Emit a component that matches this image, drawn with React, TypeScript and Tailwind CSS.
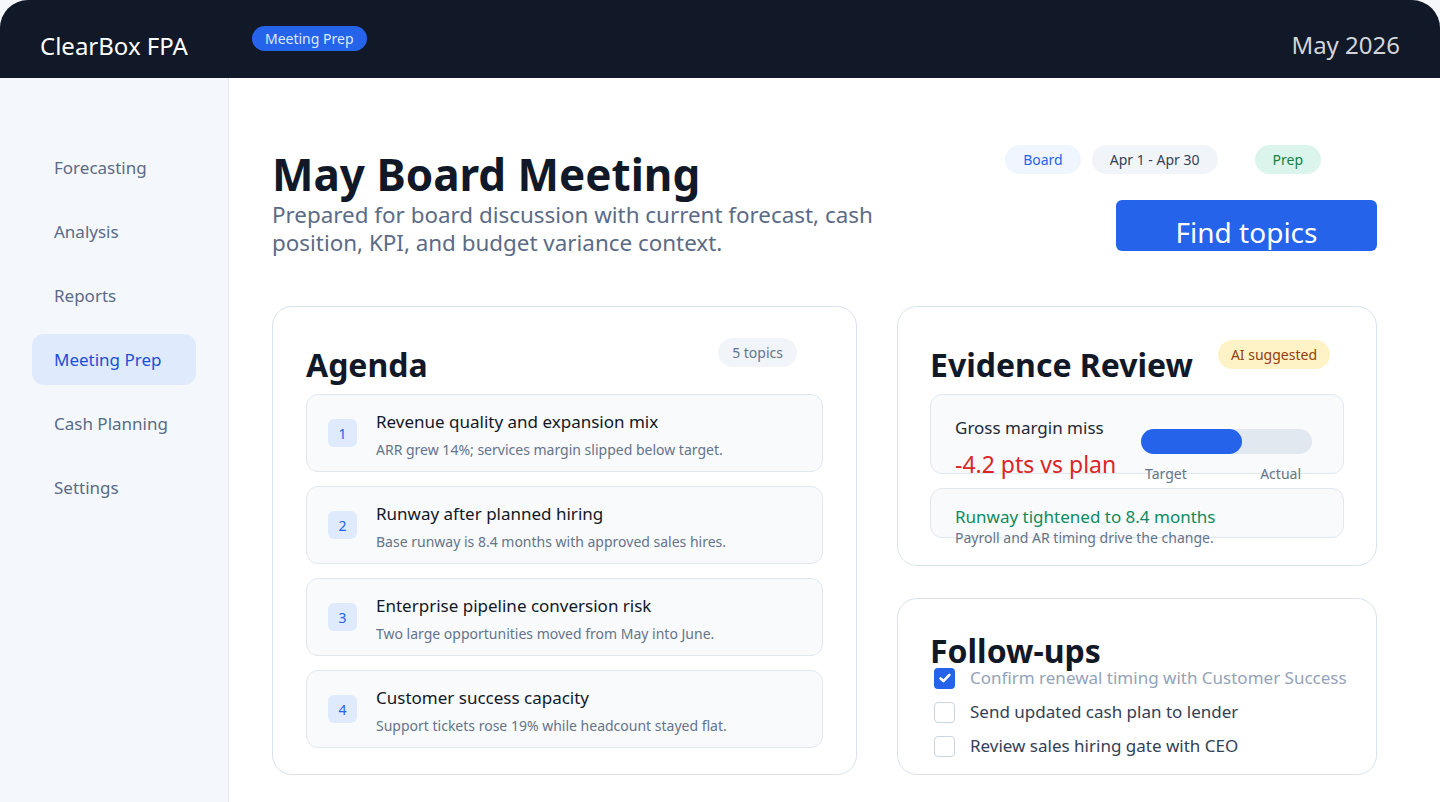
import React from 'react';

// --- DATA ---
const navItems = ['Forecasting', 'Analysis', 'Reports', 'Meeting Prep', 'Cash Planning', 'Settings'];

const agenda = [
    { title: 'Revenue quality and expansion mix', note: 'ARR grew 14%; services margin slipped below target.' },
    { title: 'Runway after planned hiring', note: 'Base runway is 8.4 months with approved sales hires.' },
    { title: 'Enterprise pipeline conversion risk', note: 'Two large opportunities moved from May into June.' },
    { title: 'Customer success capacity', note: 'Support tickets rose 19% while headcount stayed flat.' },
];

const followUps = [
    { label: 'Confirm renewal timing with Customer Success', done: true },
    { label: 'Send updated cash plan to lender', done: false },
    { label: 'Review sales hiring gate with CEO', done: false },
];

// --- SMALL PIECES ---
const Pill = ({ children, className }: { children: React.ReactNode; className: string }) => (
    <span className={`inline-flex h-[29px] items-center whitespace-nowrap rounded-full text-[14px] ${className}`}>
        {children}
    </span>
);

const Checkbox = ({ checked }: { checked: boolean }) =>
    checked ? (
        <span className="flex h-[21px] w-[21px] shrink-0 items-center justify-center rounded-[4px] bg-[#2563eb]">
            <svg viewBox="0 0 16 16" className="h-[14px] w-[14px]" fill="none">
                <path d="M3 8.5l3.2 3L13 4.5" stroke="white" strokeWidth="3" strokeLinecap="round" strokeLinejoin="round" />
            </svg>
        </span>
    ) : (
        <span className="h-[21px] w-[21px] shrink-0 rounded-[4px] border border-[#cbd5e1] bg-white" />
    );

// --- MAIN ---
export default function App() {
    return (
        <div className="h-[802px] w-[1440px] overflow-hidden bg-[#f5f7fb] font-['Noto_Sans','Open_Sans',sans-serif]">
            <div className="flex h-full flex-col overflow-hidden rounded-t-[28px]">
                {/* Top bar */}
                <header className="flex h-[78px] shrink-0 items-start bg-[#111827] px-[40px]">
                    <span className="mt-[30px] text-[24px] leading-[32px] text-white">ClearBox FPA</span>
                    <span className="ml-[64px] mt-[26px] inline-flex h-[25px] items-center rounded-full bg-[#2563eb] px-[13px] text-[14px] text-[#dbeafe]">
                        Meeting Prep
                    </span>
                    <span className="ml-auto mt-[29px] text-[24px] leading-[32px] text-[#d1d5db]">May 2026</span>
                </header>

                <div className="flex min-h-0 flex-1">
                    {/* Sidebar */}
                    <aside className="flex w-[229px] shrink-0 flex-col gap-[13px] border-r border-[#e2e8f0] bg-[#f4f7fb] px-[32px] pt-[64px]">
                        {navItems.map((item) => {
                            const active = item === 'Meeting Prep';
                            return (
                                <div
                                    key={item}
                                    className={`flex h-[51px] items-center whitespace-nowrap rounded-xl px-[22px] text-[17px] ${active ? 'bg-[#dfeafd] text-[#1d4ed8]' : 'text-[#5b6b86]'}`}
                                >
                                    {item}
                                </div>
                            );
                        })}
                    </aside>

                    {/* Content */}
                    <main className="flex min-w-0 flex-1 flex-col bg-white pl-[43px] pr-[63px] pt-[67px]">
                        {/* Title row */}
                        <div className="flex h-[161px] shrink-0 justify-between">
                            <div className="pt-[5px]">
                                <h1 className="text-[44px] font-bold leading-[1.1] text-[#111827]">May Board Meeting</h1>
                                <p className="mt-[3px] w-[620px] text-[22.4px] leading-[28px] text-[#5b6b86]">
                                    Prepared for board discussion with current forecast, cash position, KPI, and budget variance context.
                                </p>
                            </div>
                            <div className="flex flex-col items-end">
                                <div className="mr-[56px] flex items-center">
                                    <Pill className="bg-[#eff6ff] px-[18px] text-[#2563eb]">Board</Pill>
                                    <Pill className="ml-[11px] bg-[#f1f5f9] px-[18px] text-[#334155]">Apr 1 - Apr 30</Pill>
                                    <Pill className="ml-[37px] bg-[#dcf5ec] px-[18px] text-[#15803d]">Prep</Pill>
                                </div>
                                <button className="mt-[26px] flex h-[51px] w-[261px] items-center justify-center rounded-md bg-[#2563eb] pt-[12px] text-[28px] text-white">
                                    Find topics
                                </button>
                            </div>
                        </div>

                        {/* Cards */}
                        <div className="grid grid-cols-[585px_480px] gap-x-[40px]">
                            {/* Agenda */}
                            <section className="h-[469px] rounded-[20px] border border-[#d9e2ef] px-[33px] pt-[31px]">
                                <div className="flex items-start justify-between">
                                    <h2 className="mt-[7px] text-[32px] font-bold leading-[40px] text-[#111827]">Agenda</h2>
                                    <Pill className="mr-[26px] bg-[#f1f5f9] px-[14px] text-[#64748b]">5 topics</Pill>
                                </div>
                                <div className="mt-[9px] flex flex-col gap-[14px]">
                                    {agenda.map((a, i) => (
                                        <div key={a.title} className="flex h-[78px] items-center rounded-xl border border-[#e2e8f0] bg-[#f8fafc] pl-[21px]">
                                            <span className="flex h-[28px] w-[29px] shrink-0 items-center justify-center rounded-md bg-[#dfeafd] text-[14px] text-[#2563eb]">
                                                {i + 1}
                                            </span>
                                            <div className="ml-[19px] pt-[3px]">
                                                <div className="text-[17px] leading-[24px] text-[#111827]">{a.title}</div>
                                                <div className="mt-[6px] text-[14px] leading-[20px] text-[#64748b]">{a.note}</div>
                                            </div>
                                        </div>
                                    ))}
                                </div>
                            </section>

                            <div className="flex flex-col gap-[32px]">
                                {/* Evidence */}
                                <section className="h-[260px] rounded-[20px] border border-[#d9e2ef] px-[32px] pt-[31px]">
                                    <div className="flex items-start justify-between">
                                        <h2 className="mt-[7px] text-[32px] font-bold leading-[40px] text-[#111827]">Evidence Review</h2>
                                        <Pill className="mr-[14px] mt-[2px] bg-[#fef3c7] px-[13px] text-[#92400e]">AI suggested</Pill>
                                    </div>
                                    <div className="mt-[9px] flex h-[80px] rounded-xl border border-[#e2e8f0] bg-[#f8fafc] pl-[24px] pr-[31px] pt-[21px]">
                                        <div>
                                            <div className="text-[17px] leading-[24px] text-[#1f2937]">Gross margin miss</div>
                                            <div className="mt-[8px] whitespace-nowrap text-[23px] leading-[32px] text-[#dc2626]">-4.2 pts vs plan</div>
                                        </div>
                                        <div className="ml-auto w-[171px] pt-[13px]">
                                            <div className="h-[25px] w-full rounded-full bg-[#e2e8f0]">
                                                <div className="h-full w-[59%] rounded-full bg-[#2563eb]" />
                                            </div>
                                            <div className="mt-[10px] flex justify-between pl-[4px] pr-[11px] text-[14px] leading-[20px] text-[#64748b]">
                                                <span>Target</span>
                                                <span>Actual</span>
                                            </div>
                                        </div>
                                    </div>
                                    <div className="mt-[14px] h-[50px] rounded-xl border border-[#e2e8f0] bg-[#f8fafc] pl-[24px] pt-[16px]">
                                        <div className="text-[17px] leading-[24px] text-[#0f8a5f]">Runway tightened to 8.4 months</div>
                                        <div className="mt-[-1px] text-[14px] leading-[20px] text-[#64748b]">Payroll and AR timing drive the change.</div>
                                    </div>
                                </section>

                                {/* Follow-ups */}
                                <section className="h-[177px] rounded-[20px] border border-[#d9e2ef] px-[32px] pt-[32px]">
                                    <h2 className="text-[32px] font-bold leading-[40px] text-[#111827]">Follow-ups</h2>
                                    <div className="mt-[-10px] flex flex-col pl-[4px]">
                                        {followUps.map((f) => (
                                            <div key={f.label} className="flex h-[34px] items-center gap-[15px]">
                                                <Checkbox checked={f.done} />
                                                <span className={`whitespace-nowrap text-[17px] ${f.done ? 'text-[#94a3b8]' : 'text-[#334155]'}`}>{f.label}</span>
                                            </div>
                                        ))}
                                    </div>
                                </section>
                            </div>
                        </div>
                    </main>
                </div>
            </div>
        </div>
    );
}
